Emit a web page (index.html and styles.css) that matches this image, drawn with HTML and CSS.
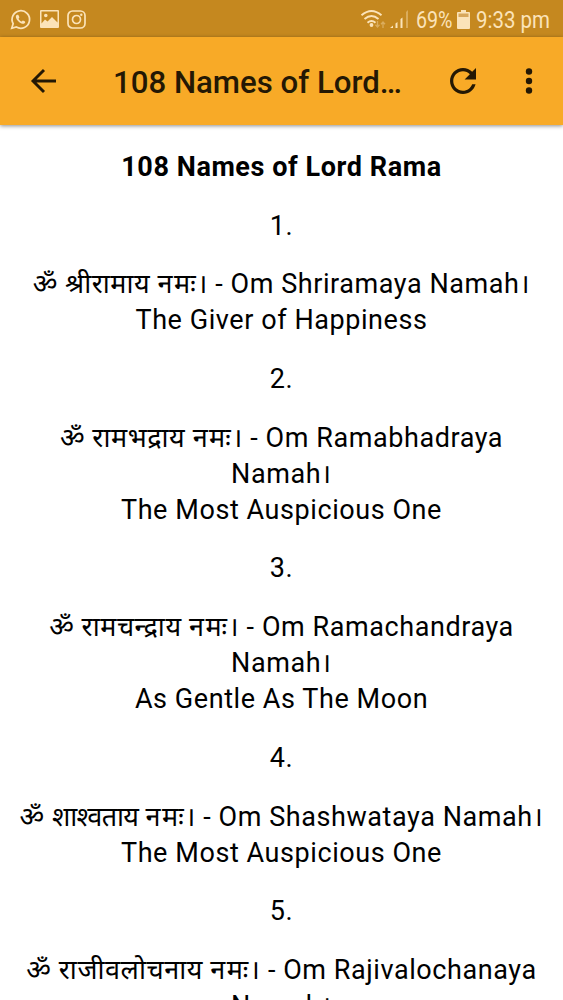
FILE: index.html
```html
<!DOCTYPE html>
<html lang="en">
    <head>
        <meta charset="utf-8">
        <meta name="viewport" content="width=device-width, initial-scale=1">
        <title>108 Names of Lord Rama</title>
        <link rel="stylesheet" href="styles.css">
    </head>
    <body>
        <div class="status_bar">
            <div class="status_left">
                <svg width="21" height="21" viewBox="0 0 24 24"><path d="M2 22l1.6-5.2A10 10 0 1 1 7.300 20.600z" fill="none" stroke="currentColor" stroke-width="2"/><path d="M8.300 6.500c-.5 0-1.800 1-1.600 2.700.3 3.200 4.600 7.400 7.700 7.700 1.700.2 3-.9 3-2.100 0-.5-2.200-1.700-2.700-1.700-.6 0-.9 1.200-1.400 1.200-.9 0-3.400-2.300-3.500-3.200 0-.5.9-.9.9-1.500 0-.5-.9-3-1.400-3.100z" fill="currentColor"/></svg>
                <svg width="19" height="18" viewBox="0 0 19 18"><path fill="currentColor" fill-rule="evenodd" d="M1 0h17a1 1 0 0 1 1 1v16a1 1 0 0 1-1 1H1a1 1 0 0 1-1-1V1a1 1 0 0 1 1-1zM1.500 1.500v12L5 9.500l2.500 2 4.500-4.500 5.500 5.500v-11zM4 5.500a1.800 1.800 0 1 0 3.600 0 1.800 1.800 0 1 0-3.600 0z"/></svg>
                <svg width="19" height="19" viewBox="0 0 19 19"><g fill="none" stroke="currentColor" stroke-width="1.700"><rect x="1" y="1" width="17" height="17" rx="4.500"/><circle cx="9.500" cy="9.500" r="4"/></g><circle cx="14.300" cy="4.700" r="1.200" fill="currentColor"/></svg>
            </div>
            <div class="status_right">
                <svg class="wifi" width="26" height="19" viewBox="0 0 26 19"><g fill="none" stroke="currentColor" stroke-width="1.900"><path d="M.5 5.300Q10.500 -3.300 20.500 5.300"/><path d="M3.500 9Q10.500 2.900 17.500 9"/><path d="M6.500 12.700Q10.500 9.200 14.500 12.700"/></g><circle cx="10.500" cy="15" r="1.900" fill="currentColor"/><path class="dim" d="M16.500 11v6m-2-2.300l2 2.300 2-2.300M22 18v-6m-2 2.300l2-2.300 2 2.300" fill="none" stroke="currentColor" stroke-width="1.300"/></svg>
                <svg class="signal" width="19" height="18" viewBox="0 0 19 18"><g fill="currentColor"><path d="M0 18l3-2.500V18zM5.500 13.500l2-1.500v6h-2zM10.500 9l2-1.500V18h-2z"/><path class="dim" d="M16 2l2-2v18h-2z"/></g></svg>
                <svg class="percent" width="37" height="28" viewBox="0 0 37 28"><text x="0" y="23" textLength="36.500" lengthAdjust="spacingAndGlyphs">69%</text></svg>
                <svg class="battery" width="13" height="19" viewBox="0 0 13 19"><path d="M4 0h5v2h3a1 1 0 0 1 1 1v15a1 1 0 0 1-1 1H1a1 1 0 0 1-1-1V3a1 1 0 0 1 1-1h3z" fill="currentColor"/><path d="M1.500 3.500h10V7h-10z" fill="#d7a65b"/></svg>
                <svg class="clock" width="75" height="28" viewBox="0 0 75 28"><text x="0" y="23" textLength="74" lengthAdjust="spacingAndGlyphs">9:33 pm</text></svg>
            </div>
        </div>
        <div class="top_menu">
            <svg class="back" width="26" height="24" viewBox="0 0 26 24"><path d="M25 12H2M13 1L2 12l11 11" fill="none" stroke="currentColor" stroke-width="2.900"/></svg>
            <div class="title">108 Names of Lord…</div>
            <svg class="reload" width="26" height="26" viewBox="4 4 16 16"><path fill="currentColor" d="M17.650 6.350C16.200 4.900 14.210 4 12 4c-4.420 0-7.990 3.580-7.990 8s3.570 8 7.990 8c3.730 0 6.840-2.550 7.730-6h-2.080c-.82 2.330-3.040 4-5.650 4-3.310 0-6-2.690-6-6s2.690-6 6-6c1.660 0 3.140.69 4.220 1.780L13 11h7V4l-2.350 2.350z"/></svg>
            <svg class="more" width="8" height="26" viewBox="0 0 8 26"><g fill="currentColor"><circle cx="4" cy="3.500" r="3.200"/><circle cx="4" cy="13" r="3.200"/><circle cx="4" cy="22.500" r="3.200"/></g></svg>
        </div>
        <div class="page">
            <p class="heading">108 Names of Lord Rama</p>
            <p>1.</p>
            <p>ॐ श्रीरामाय <span class="namah">नमः</span>। - Om Shriramaya Namah।<br>The Giver of Happiness</p>
            <p>2.</p>
            <p>ॐ रामभद्राय <span class="namah">नमः</span>। - Om Ramabhadraya Namah।<br>The Most Auspicious One</p>
            <p>3.</p>
            <p>ॐ रामचन्द्राय <span class="namah">नमः</span>। - Om Ramachandraya Namah।<br>As Gentle As The Moon</p>
            <p>4.</p>
            <p>ॐ <span class="name" lang="sa">शाश्वताय</span> <span class="namah">नमः</span>। - Om Shashwataya Namah।<br>The Most Auspicious One</p>
            <p>5.</p>
            <p>ॐ राजीवलोचनाय <span class="namah">नमः</span>। - Om Rajivalochanaya Namah।</p>
        </div>
    </body>
</html>
```
FILE: styles.css
```css
body {
    margin:0;
    height:1000px;
    overflow:hidden;
    display:flex;
    flex-direction:column;
    background:#fff;
    font-family:Roboto, "Noto Sans", "Noto Sans Devanagari", sans-serif;
}
svg {
    display:block;
    flex:none;
    overflow:visible;
}
.status_bar {
    flex:none;
    height:37px;
    box-sizing:border-box;
    padding:1px 12px 0 10px;
    display:flex;
    justify-content:space-between;
    align-items:center;
    background:#c5881f;
    color:#fbe3b9;
}
.status_left {
    display:flex;
    align-items:center;
    gap:8.500px;
}
.status_right {
    display:flex;
    align-items:center;
}
.status_right text {
    font-size:23px;
    fill:currentColor;
}
.dim {
    opacity:.4;
}
.signal {
    margin:0 7px 0 3px;
}
.battery {
    margin:0 6px 0 4px;
}
.top_menu {
    flex:none;
    height:88px;
    box-sizing:border-box;
    padding:0 30px 0 31px;
    display:flex;
    align-items:center;
    background:#f8aa27;
    color:#241804;
    box-shadow:0 1px 4px rgba(0,0,0,.45);
    z-index:1;
}
.title {
    flex:1;
    margin-left:56px;
    padding-top:2px;
    font-size:31.200px;
    font-weight:500;
    white-space:nowrap;
}
.more {
    margin-left:49px;
}
.page {
    padding:24px 14px 0;
    text-align:center;
    font-size:27px;
    line-height:36px;
    letter-spacing:.57px;
    color:#000;
}
.page p {
    margin:0 0 22.700px;
}
.page .heading {
    font-weight:700;
}
.namah {
    letter-spacing:1.500px;
}
.name {
    letter-spacing:-.7px;
}
```
